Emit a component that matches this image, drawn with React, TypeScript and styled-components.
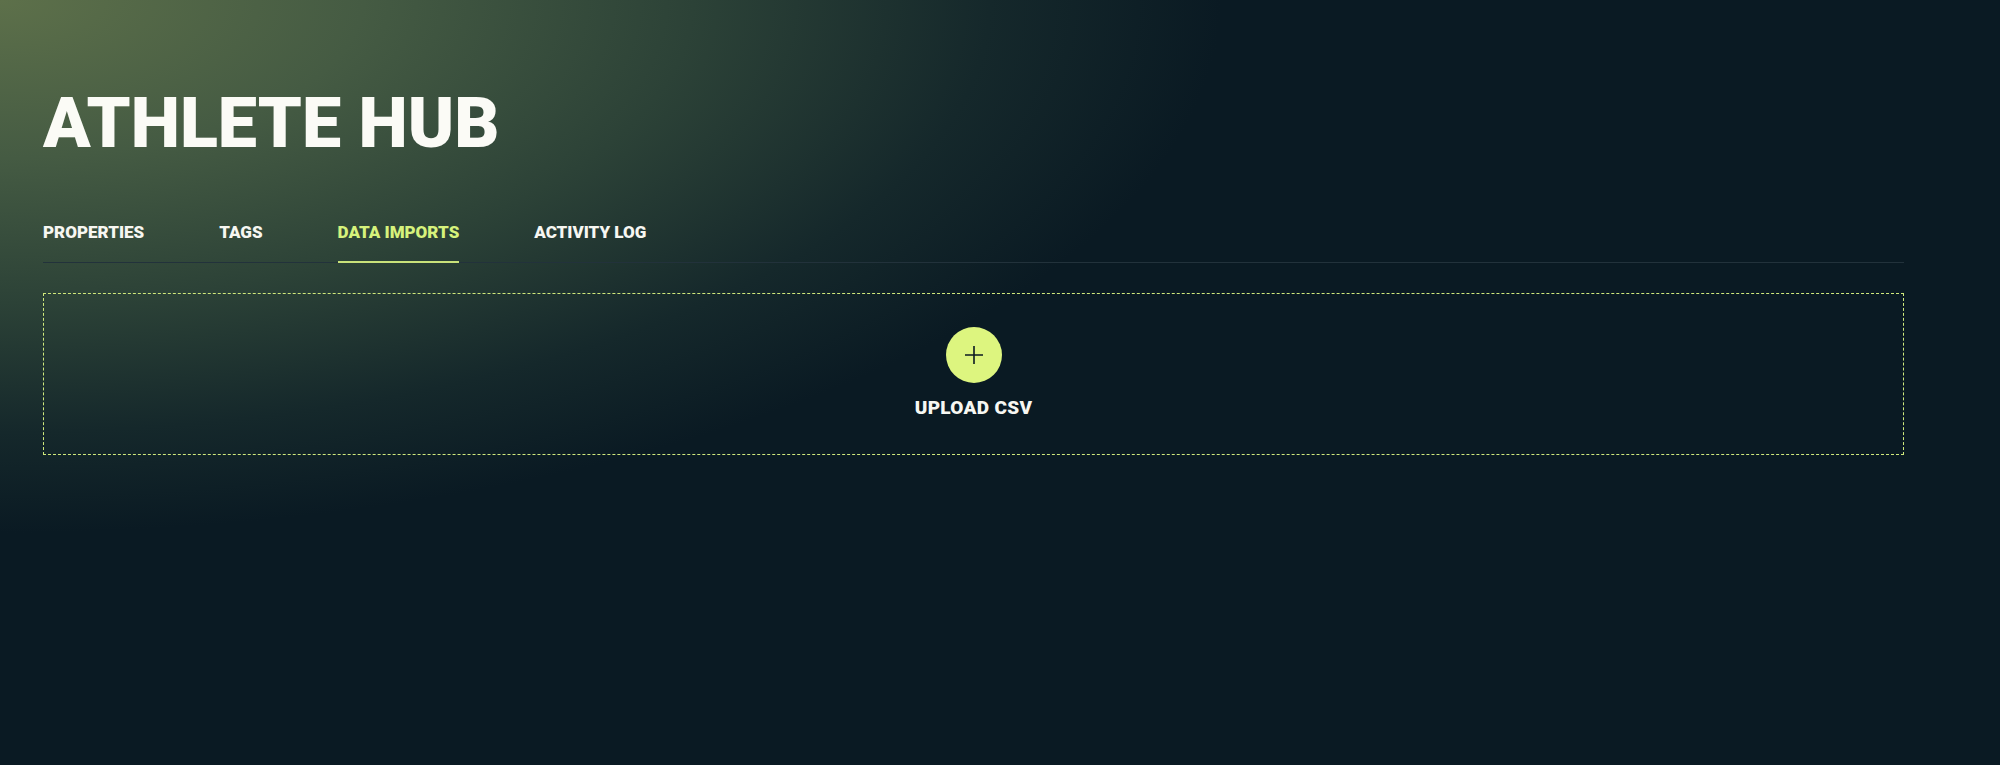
import React, { useState } from 'react'
import styled, { createGlobalStyle } from 'styled-components'

const GlobalStyle = createGlobalStyle`
  html, body {
    margin: 0;
    padding: 0;
    background: #0a1a23;
  }
  * {
    box-sizing: border-box;
  }
`

const Page = styled.div`
  min-height: 100vh;
  padding: 88px 96px 0 43px;
  font-family: Roboto, 'Liberation Sans', sans-serif;
  color: #ffffff;
  background:
    radial-gradient(ellipse 1650px 720px at 0 0, #5d704a 0%, #455b43 22%, #2c4237 42%, #15282b 60%, #0a1a23 74%),
    #0a1a23;
`

const Title = styled.h1`
  margin: 0;
  font-size: 70px;
  line-height: 1;
  font-weight: 900;
  color: #fbfbf6;
`

const TabBar = styled.nav`
  display: flex;
  gap: 75px;
  margin-top: 66px;
  border-bottom: 1px solid #22323b;
`

const Tab = styled.button<{ $active?: boolean }>`
  appearance: none;
  background: none;
  border: 0;
  padding: 0 0 20px;
  margin: 0 0 -1px;
  font-family: inherit;
  font-size: 17px;
  line-height: 1;
  font-weight: 900;
  text-transform: uppercase;
  cursor: pointer;
  color: ${(p) => (p.$active ? '#d6f27c' : '#f7f7f2')};
  border-bottom: 2px solid ${(p) => (p.$active ? '#c9e27a' : 'transparent')};
`

const DropZone = styled.div`
  margin-top: 30px;
  border: 1px dashed #cfe87c;
  padding: 33px 0 37px;
  display: flex;
  flex-direction: column;
  align-items: center;
  gap: 15px;
`

const PlusButton = styled.button`
  width: 56px;
  height: 56px;
  border-radius: 50%;
  border: 0;
  padding: 0;
  background: #ddf57f;
  display: flex;
  align-items: center;
  justify-content: center;
  cursor: pointer;
`

const UploadLabel = styled.span`
  font-size: 19px;
  line-height: 1;
  font-weight: 900;
  color: #f7f7f2;
  letter-spacing: 0.3px;
`

const tabs = ['Properties', 'Tags', 'Data Imports', 'Activity Log']

export default function App() {
  const [active, setActive] = useState('Data Imports')

  return (
    <>
      <GlobalStyle />
      <Page>
        <Title>ATHLETE HUB</Title>
        <TabBar>
          {tabs.map((t) => (
            <Tab key={t} $active={t === active} onClick={() => setActive(t)}>
              {t}
            </Tab>
          ))}
        </TabBar>
        <DropZone>
          <PlusButton aria-label="Upload CSV">
            <svg width="20" height="20" viewBox="0 0 20 20" fill="none">
              <path d="M10 1v18M1 10h18" stroke="#0b1a22" strokeWidth="1.6" />
            </svg>
          </PlusButton>
          <UploadLabel>UPLOAD CSV</UploadLabel>
        </DropZone>
      </Page>
    </>
  )
}
